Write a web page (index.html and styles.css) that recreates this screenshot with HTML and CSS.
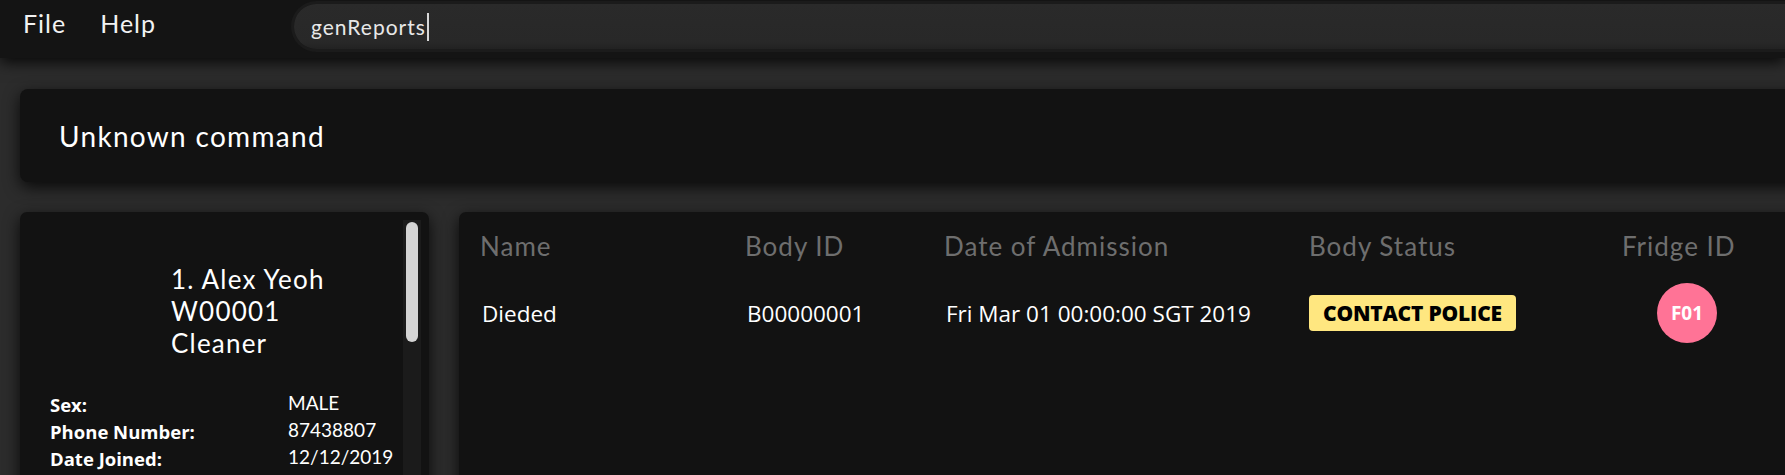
FILE: index.html
```html
<!DOCTYPE html>
<html>
<head>
<meta charset="utf-8">
<link rel="stylesheet" href="styles.css">
</head>
<body>
<div class="menubar">
  <div class="menu">
    <span class="menu-item">File</span>
    <span class="menu-item">Help</span>
  </div>
  <div class="command">
    <span class="command-text">genReports</span><span class="caret"></span>
  </div>
</div>
<div class="main">
  <div class="result">Unknown command</div>
  <div class="panels">
    <div class="worker-panel">
      <div class="worker-card">
        <div class="worker-head">
          <div>1. Alex Yeoh</div>
          <div>W00001</div>
          <div>Cleaner</div>
        </div>
        <div class="details">
          <div class="label">Sex:</div><div class="value">MALE</div>
          <div class="label">Phone Number:</div><div class="value">87438807</div>
          <div class="label">Date Joined:</div><div class="value">12/12/2019</div>
          <div class="label">Date of Birth:</div><div class="value">10/10/1998</div>
        </div>
      </div>
      <div class="scroll-track"><div class="scroll-thumb"></div></div>
    </div>
    <div class="body-panel">
      <div class="row header">
        <div class="c1">Name</div>
        <div class="c2">Body ID</div>
        <div class="c3">Date of Admission</div>
        <div class="c4">Body Status</div>
        <div class="c5">Fridge ID</div>
      </div>
      <div class="row data">
        <div class="c1">Dieded</div>
        <div class="c2">B00000001</div>
        <div class="c3">Fri Mar 01 00:00:00 SGT 2019</div>
        <div class="c4"><span class="badge">CONTACT POLICE</span></div>
        <div class="c5"><span class="fridge">F01</span></div>
      </div>
    </div>
  </div>
</div>
</body>
</html>
```
FILE: styles.css
```css
html, body {
  margin: 0;
  padding: 0;
  height: 100%;
  overflow: hidden;
}
body {
  background: #2c2c2c;
  color: #ffffff;
  font-family: "Lato", "DejaVu Sans", sans-serif;
}
.menubar {
  height: 58px;
  background: #141414;
  display: flex;
  align-items: flex-start;
  box-shadow: 0 4px 14px rgba(0,0,0,0.85);
  position: relative;
  z-index: 2;
}
.menu {
  display: flex;
  gap: 34px;
  padding-left: 23px;
  width: 271px;
  height: 45px;
  align-items: center;
  font-size: 25px;
  letter-spacing: 1px;
  color: #f2f2f2;
}
.command {
  flex: 1;
  margin-top: 4px;
  height: 45px;
  background: linear-gradient(#2a2a2a 0%, #282828 85%, #222222 100%);
  border-radius: 23px 0 0 23px;
  box-shadow: 0 0 0 3px #1b1b1b;
  display: flex;
  align-items: center;
  padding-left: 17px;
  font-size: 21px;
  letter-spacing: 1px;
  color: #e8e8e8;
}
.caret {
  display: inline-block;
  width: 2px;
  height: 28px;
  background: #d8d8d8;
  margin-left: 1px;
}
.main {
  padding: 31px 0 0 20px;
  margin-right: -40px;
}
.result {
  height: 93px;
  background: #121212;
  border-radius: 8px;
  box-shadow: 0 5px 16px rgba(0,0,0,0.8);
  display: flex;
  align-items: center;
  padding-left: 39px;
  font-size: 28px;
  letter-spacing: 1.3px;
  color: #ffffff;
}
.panels {
  display: flex;
  gap: 30px;
  margin-top: 30px;
}
.worker-panel {
  width: 409px;
  height: 300px;
  background: #121212;
  border-radius: 7px;
  box-shadow: 0 5px 16px rgba(0,0,0,0.8);
  display: flex;
}
.worker-card {
  flex: 1;
}
.worker-head {
  padding: 51px 0 0 151px;
  font-size: 26px;
  letter-spacing: 1.2px;
  line-height: 32px;
}
.details {
  display: grid;
  grid-template-columns: 238px auto;
  padding: 32px 0 0 30px;
  line-height: 27px;
}
.label {
  font-family: "Open Sans", "Noto Sans", sans-serif;
  font-weight: 700;
  font-size: 18.5px;
}
.value {
  font-size: 19px;
  transform: translateY(-2px);
}
.scroll-track {
  width: 18px;
  margin: 8px 8px 0 0;
  background: #1b1b1b;
  display: flex;
  justify-content: center;
}
.scroll-thumb {
  width: 12px;
  height: 120px;
  margin-top: 2px;
  background: #d4d4d4;
  border-radius: 6px;
}
.body-panel {
  flex: 1;
  height: 300px;
  background: #121212;
  border-radius: 7px;
  box-shadow: 0 5px 16px rgba(0,0,0,0.8);
  padding-left: 21px;
}
.row {
  display: flex;
  align-items: center;
}
.header {
  height: 68px;
  font-size: 26px;
  letter-spacing: 1px;
  color: #6e6e6e;
}
.data {
  height: 66px;
  font-family: "Open Sans", "Noto Sans", sans-serif;
  font-size: 22.5px;
}
.c1 { width: 265px; }
.c2 { width: 199px; }
.c3 { width: 365px; }
.c4 { width: 313px; }
.c5 { width: 200px; }
.data .c1, .data .c2, .data .c3 { padding-left: 2px; box-sizing: border-box; }
.badge {
  display: inline-flex;
  align-items: center;
  justify-content: center;
  width: 207px;
  height: 36px;
  background: #ffe780;
  color: #000000;
  font-weight: 800;
  font-size: 21px;
  letter-spacing: -0.2px;
  border-radius: 4px;
}
.fridge {
  display: inline-flex;
  align-items: center;
  justify-content: center;
  width: 60px;
  height: 60px;
  margin-left: 35px;
  border-radius: 50%;
  background: #ff7396;
  color: #ffffff;
  font-weight: 700;
  font-size: 19px;
}
```
